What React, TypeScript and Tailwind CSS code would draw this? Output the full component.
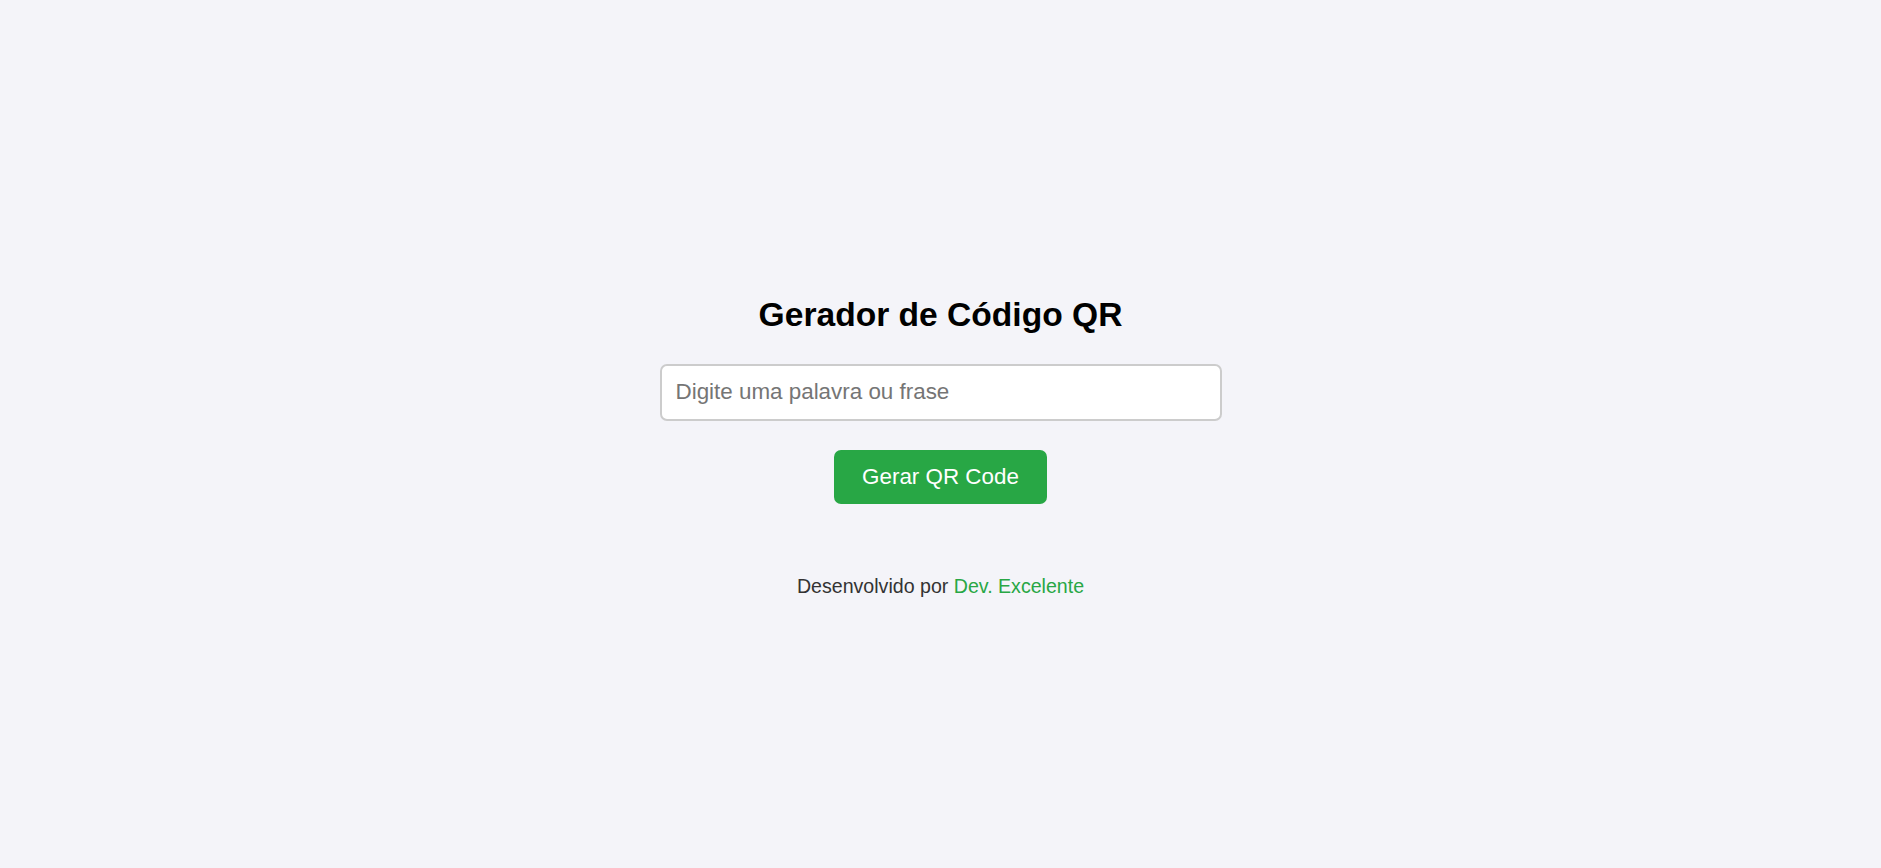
export default function App() {
  return (
    <div className="min-h-screen bg-[#f4f4f9] font-['Liberation_Sans',Arial,sans-serif]">
      <div className="flex flex-col items-center pt-[296px]">
        <h1 className="text-[33.6px] font-bold leading-[38.6px] text-black">
          Gerador de Código QR
        </h1>

        <input
          type="text"
          placeholder="Digite uma palavra ou frase"
          className="mt-[29px] h-[57px] w-[562px] rounded-[7px] border-2 border-[#cccccc] bg-white px-[14px] text-[22.4px] text-black outline-none placeholder:text-[#757575]"
        />

        <button
          type="button"
          className="mt-[29px] h-[54px] rounded-[7px] bg-[#28a745] px-[28px] text-[22.4px] text-white"
        >
          Gerar QR Code
        </button>

        <p className="mt-[71px] text-[19.6px] leading-[22.5px] text-[#333333]">
          Desenvolvido por{" "}
          <a href="#" className="text-[#28a745]">
            Dev. Excelente
          </a>
        </p>
      </div>
    </div>
  );
}
